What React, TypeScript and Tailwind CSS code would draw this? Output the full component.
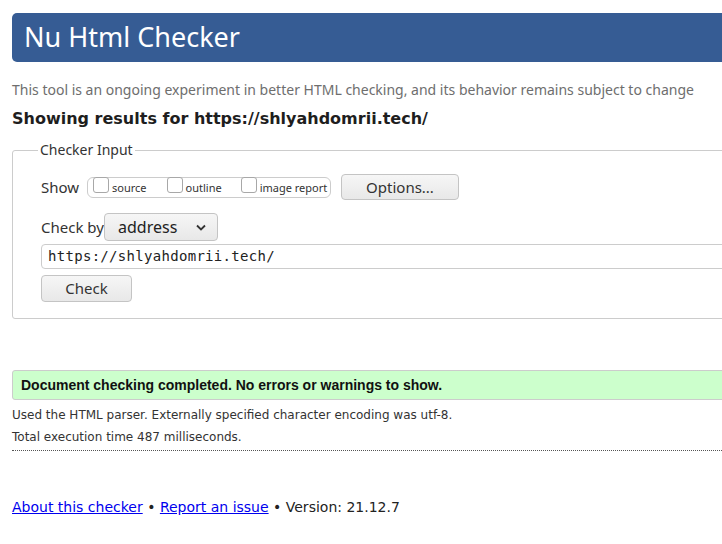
import * as React from "react";

const ui = "font-['Noto_Sans','Open_Sans',sans-serif]";
const dv = "font-['DejaVu_Sans',sans-serif]";

const Checkbox: React.FC<{ label: string; className?: string }> = ({ label, className }) => (
  <label className={`flex items-start ${className ?? ""}`}>
    <span className="mt-[-1px] h-[16px] w-[16px] rounded-[3px] border border-[#a8a8a8] bg-white" />
    <span className="ml-[3px] mt-[3px] text-[11px] leading-[14px] text-[#333]">{label}</span>
  </label>
);

const GrayButton: React.FC<{ children: React.ReactNode; className?: string }> = ({ children, className }) => (
  <button
    className={`flex items-center justify-center rounded-[4px] border border-[#c4c4c4] bg-gradient-to-b from-[#f6f6f6] to-[#e8e8e8] text-[15px] text-[#333] ${className ?? ""}`}
  >
    {children}
  </button>
);

export default function App() {
  return (
    <div className={`h-[544px] w-[722px] overflow-hidden bg-white ${ui}`}>
      <div className="w-[800px] pl-[12px] pt-[13px]">
        <header className="flex h-[49px] items-center rounded-l-[5px] bg-[#365c94] pl-[12px]">
          <h1 className="pb-[2px] text-[27px] leading-none text-white">Nu Html Checker</h1>
        </header>

        <p className="mt-[18px] text-[14px] leading-[20px] text-[#6e6e6e]">
          This tool is an ongoing experiment in better HTML checking, and its behavior remains subject to change
        </p>
        <h2 className={`mt-[9px] text-[16px] font-bold leading-[20px] text-[#1e1e1e] ${dv}`}>
          Showing results for https://shlyahdomrii.tech/
        </h2>

        <fieldset className="mt-[12px] rounded-[3px] border border-[#cccccc] pb-[16px]">
          <legend className="ml-[25px] px-[2px] text-[14px] leading-[18px] text-[#333]">Checker Input</legend>

          <div className="pl-[28px]">
            <div className="mt-[15px] flex items-center">
              <span className="w-[46px] text-[15px] text-[#333]">Show</span>
              <div className="flex h-[21px] w-[244px] items-start rounded-[6px] border border-[#cccccc] pl-[5px]">
                <Checkbox label="source" />
                <Checkbox label="outline" className="ml-[20px]" />
                <Checkbox label="image report" className="ml-[19px]" />
              </div>
              <GrayButton className="ml-[10px] h-[26px] w-[118px]">Options...</GrayButton>
            </div>

            <div className="mt-[13px] flex items-center">
              <span className="w-[63px] text-[15px] text-[#333]">Check by</span>
              <div className="flex h-[28px] w-[114px] items-center justify-between rounded-[4px] border border-[#c4c4c4] bg-gradient-to-b from-[#f6f6f6] to-[#e8e8e8] pl-[13px] pr-[11px]">
                <span className="text-[16px] text-[#222]">address</span>
                <svg width="10" height="7" viewBox="0 0 10 7">
                  <path d="M1 1.5 L5 5.5 L9 1.5" fill="none" stroke="#333" strokeWidth="1.8" />
                </svg>
              </div>
            </div>

            <div className="mt-[3px] flex h-[25px] items-center rounded-[4px] border border-[#cccccc] pl-[6px]">
              <span className="font-['DejaVu_Sans_Mono',monospace] text-[14px] tracking-[0.3px] text-[#222]">
                https://shlyahdomrii.tech/
              </span>
            </div>

            <GrayButton className="mt-[6px] h-[27px] w-[91px]">Check</GrayButton>
          </div>
        </fieldset>

        <div className="mt-[51px] flex h-[30px] items-center rounded-l-[3px] border border-[#cccccc] bg-[#ccffcc] pl-[8px]">
          <span className="font-['Liberation_Sans',Arial,sans-serif] text-[14px] font-bold text-[#111]">
            Document checking completed. No errors or warnings to show.
          </span>
        </div>

        <div className={`${dv} text-[12px] text-[#333]`}>
          <p className="mt-[4px] leading-[22px]">Used the HTML parser. Externally specified character encoding was utf-8.</p>
          <p className="leading-[22px]">Total execution time 487 milliseconds.</p>
        </div>
        <div className="mt-[2px] border-t border-dotted border-[#555]" />

        <footer className={`${dv} mt-[46px] text-[14px] text-[#222]`}>
          <a href="#" className="text-[#0000ee] underline">About this checker</a>
          {" • "}
          <a href="#" className="text-[#0000ee] underline">Report an issue</a>
          {" • Version: 21.12.7"}
        </footer>
      </div>
    </div>
  );
}
